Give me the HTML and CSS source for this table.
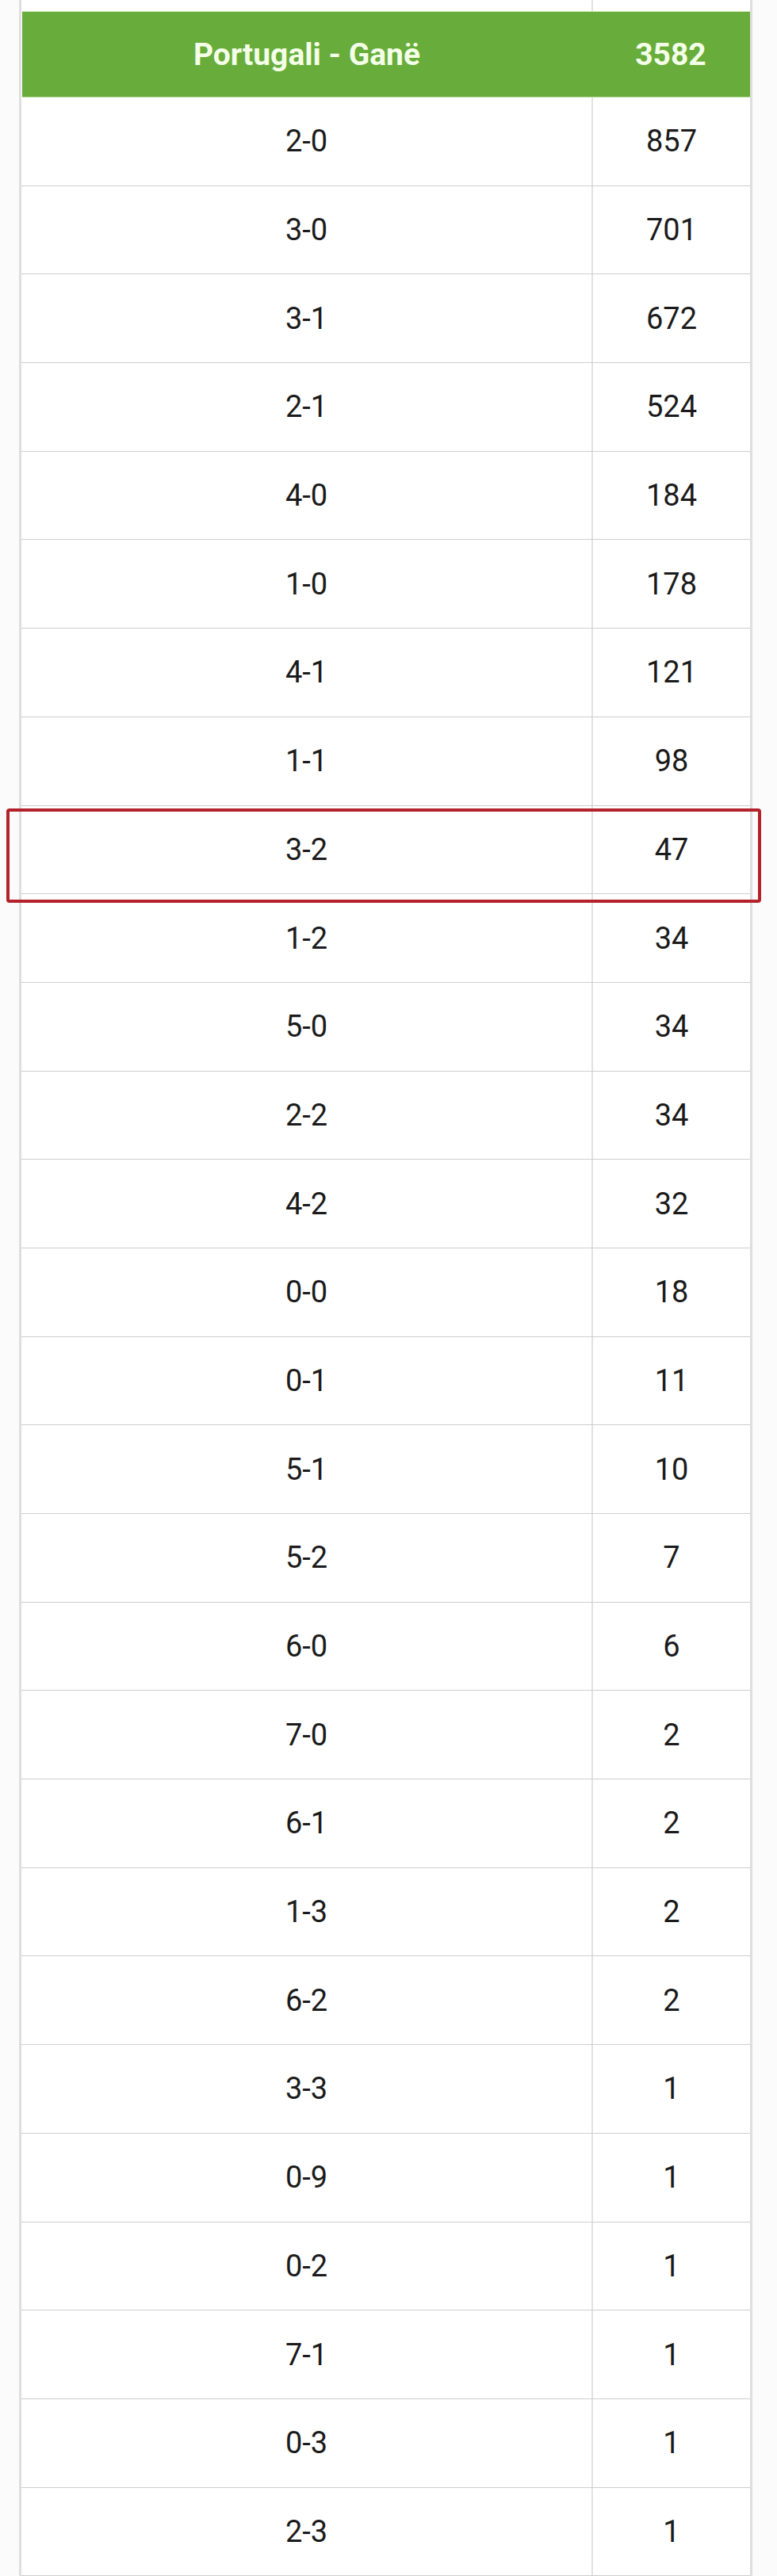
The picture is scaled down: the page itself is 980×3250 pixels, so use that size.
FILE: index.html
```html
<!DOCTYPE html>
<html lang="sq">
<head>
<meta charset="utf-8">
<title>Portugali - Ganë</title>
<link rel="stylesheet" href="styles.css">
</head>
<body>
<div class="page">
  <div class="board">
    <div class="row row-prev"><div class="cell"></div><div class="cell num"></div></div>
    <div class="row row-head"><div class="cell title">Portugali - Ganë</div><div class="cell num">3582</div></div>
    <div class="row"><div class="cell">2-0</div><div class="cell num">857</div></div>
    <div class="row"><div class="cell">3-0</div><div class="cell num">701</div></div>
    <div class="row"><div class="cell">3-1</div><div class="cell num">672</div></div>
    <div class="row"><div class="cell">2-1</div><div class="cell num">524</div></div>
    <div class="row"><div class="cell">4-0</div><div class="cell num">184</div></div>
    <div class="row"><div class="cell">1-0</div><div class="cell num">178</div></div>
    <div class="row"><div class="cell">4-1</div><div class="cell num">121</div></div>
    <div class="row"><div class="cell">1-1</div><div class="cell num">98</div></div>
    <div class="row"><div class="cell">3-2</div><div class="cell num">47</div></div>
    <div class="row"><div class="cell">1-2</div><div class="cell num">34</div></div>
    <div class="row"><div class="cell">5-0</div><div class="cell num">34</div></div>
    <div class="row"><div class="cell">2-2</div><div class="cell num">34</div></div>
    <div class="row"><div class="cell">4-2</div><div class="cell num">32</div></div>
    <div class="row"><div class="cell">0-0</div><div class="cell num">18</div></div>
    <div class="row"><div class="cell">0-1</div><div class="cell num">11</div></div>
    <div class="row"><div class="cell">5-1</div><div class="cell num">10</div></div>
    <div class="row"><div class="cell">5-2</div><div class="cell num">7</div></div>
    <div class="row"><div class="cell">6-0</div><div class="cell num">6</div></div>
    <div class="row"><div class="cell">7-0</div><div class="cell num">2</div></div>
    <div class="row"><div class="cell">6-1</div><div class="cell num">2</div></div>
    <div class="row"><div class="cell">1-3</div><div class="cell num">2</div></div>
    <div class="row"><div class="cell">6-2</div><div class="cell num">2</div></div>
    <div class="row"><div class="cell">3-3</div><div class="cell num">1</div></div>
    <div class="row"><div class="cell">0-9</div><div class="cell num">1</div></div>
    <div class="row"><div class="cell">0-2</div><div class="cell num">1</div></div>
    <div class="row"><div class="cell">7-1</div><div class="cell num">1</div></div>
    <div class="row"><div class="cell">0-3</div><div class="cell num">1</div></div>
    <div class="row"><div class="cell">2-3</div><div class="cell num">1</div></div>
  </div>
  <div class="highlight"></div>
</div>
</body>
</html>
```

FILE: styles.css
```css
html, body {
  margin: 0;
  padding: 0;
  background: #fbfbfb;
}

.page {
  position: relative;
  width: 980px;
  height: 3250px;
  overflow: hidden;
  font-family: Roboto, "Liberation Sans", Arial, sans-serif;
}

.board {
  margin-left: 24px;
  width: 919px;
  border-left: 3px solid #dedede;
  border-right: 3px solid #dedede;
  background: #ffffff;
}

.row {
  display: grid;
  grid-template-columns: 719px 1fr;
  height: 110.7px;
  border-bottom: 1px solid #cfcfcf;
  color: #1b1b1b;
  font-size: 38px;
}

.cell {
  display: flex;
  align-items: center;
  justify-content: center;
}

.cell.num {
  border-left: 2px solid #e2e2e2;
}

.row-prev {
  height: 14px;
  border-bottom: none;
}

.row-head {
  height: 107px;
  background: #68ad3b;
  border-top: 1px solid #c9e8b0;
  margin-left: 1px;
  grid-template-columns: 718px 1fr;
  color: #f4ffe8;
  font-weight: 700;
  font-size: 39px;
  border-bottom: 1px solid #b9dc9c;
}

.row-head .cell.num {
  border-left: none;
}

.highlight {
  position: absolute;
  left: 8px;
  top: 1020px;
  width: 944px;
  height: 111px;
  border: 4px solid #b3212a;
  border-radius: 4px;
}
```
